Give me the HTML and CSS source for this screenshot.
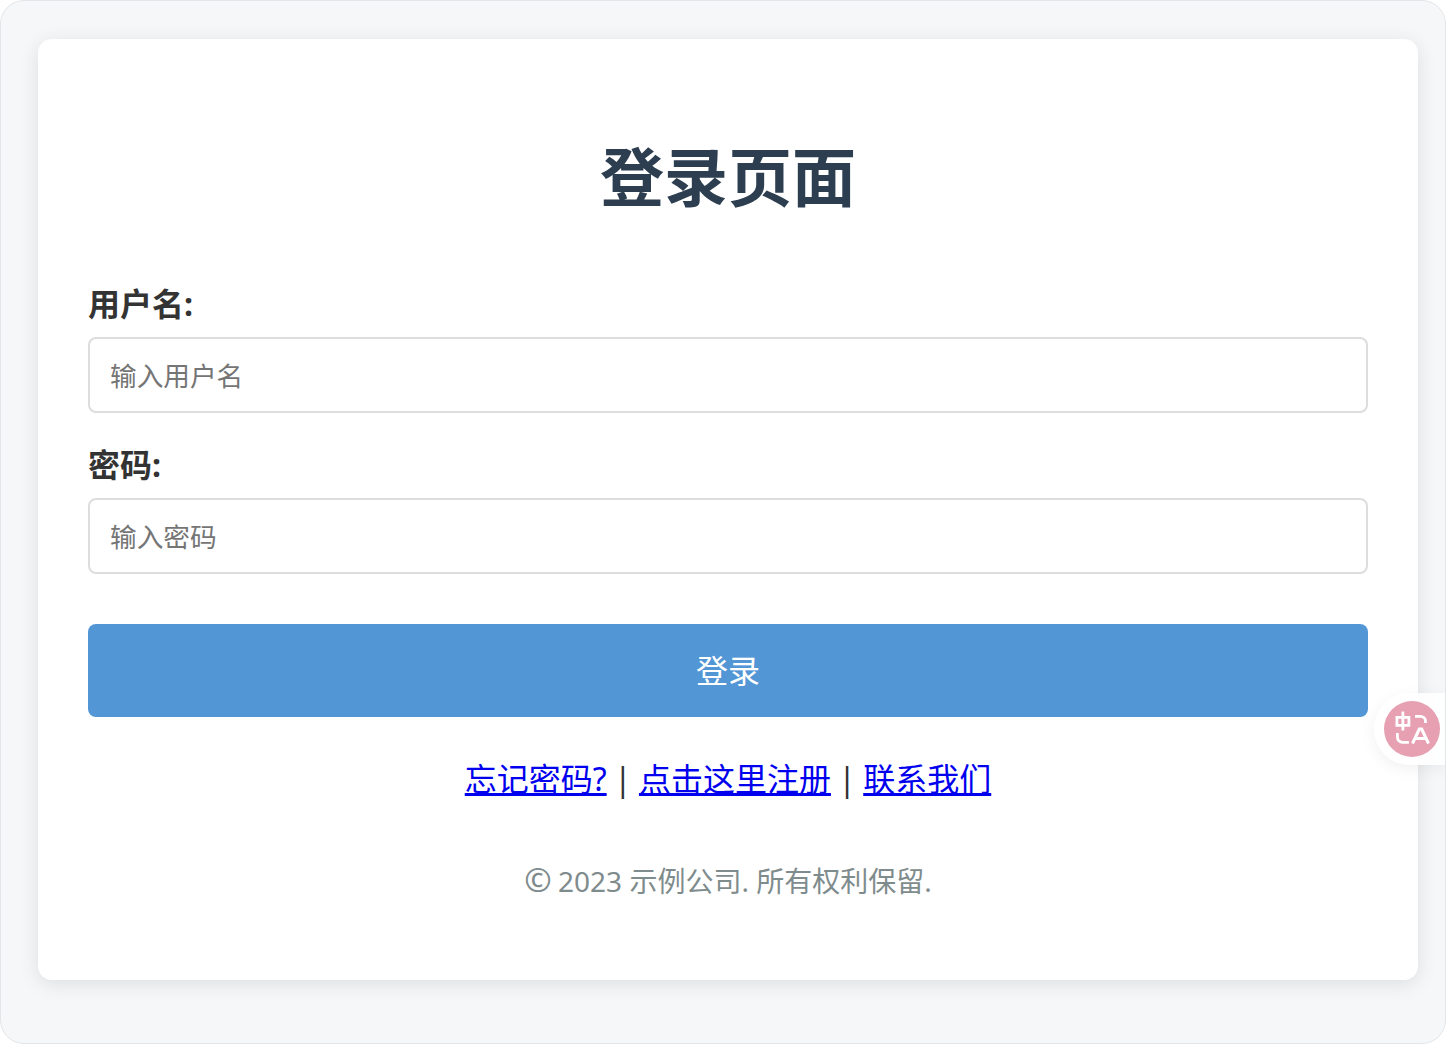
FILE: index.html
```html
<!DOCTYPE html>
<html lang="zh-CN">
<head>
<meta charset="utf-8">
<title>登录页面</title>
<link rel="stylesheet" href="styles.css">
</head>
<body>
<div class="frame">
  <main class="card">
    <h1 class="title">登录页面</h1>
    <form class="form">
      <div class="field">
        <label class="label" for="u">用户名:</label>
        <input class="input" id="u" type="text" placeholder="输入用户名">
      </div>
      <div class="field">
        <label class="label" for="p">密码:</label>
        <input class="input" id="p" type="password" placeholder="输入密码">
      </div>
      <button class="submit" type="button">登录</button>
    </form>
    <p class="links"><a href="#">忘记密码?</a> | <a href="#">点击这里注册</a> | <a href="#">联系我们</a></p>
    <p class="copy"><span class="copy-mark">©</span> 2023 示例公司. 所有权利保留.</p>
  </main>
  <div class="translate">
    <span class="translate-badge">
      <svg class="translate-icon" viewBox="0 0 56 56" width="56" height="56" fill="none" stroke="#fff" stroke-width="2.8">
        <path d="M12.900 16.400h12v8h-12zM18.900 10.500v19"/>
        <path d="M31 15.400h5.500a5 5 0 0 1 5 5v1.500"/>
        <path d="M13.400 32v4.300a5 5 0 0 0 5 5h6.500"/>
        <path d="M28.500 42.500l6.800-14.500h2.400l6.800 14.500M31 37.500h11" stroke-width="3"/>
      </svg>
    </span>
  </div>
</div>
</body>
</html>
```
FILE: styles.css
```css
* { box-sizing: border-box; }
html, body { margin: 0; height: 100%; background: #fff; }
body { font-family: "Noto Sans", "Noto Sans CJK SC", sans-serif; color: #333; }
.frame {
  position: relative;
  height: 1044px;
  padding: 38px 27px 63px 37px;
  background: #f6f7f9;
  border: 1px solid #e4e5e8;
  border-radius: 24px;
  overflow: hidden;
}
.card {
  height: 941px;
  padding: 99px 50px 0;
  background: #fff;
  border-radius: 14px;
  box-shadow: 0 4px 20px rgba(0,0,0,.1);
}
.title {
  margin: 0 0 65px;
  font-size: 64px;
  line-height: 78px;
  font-weight: 700;
  text-align: center;
  color: #2c3e50;
}
.form { display: flex; flex-direction: column; }
.field { margin-bottom: 29px; }
.label {
  display: block;
  margin-bottom: 10px;
  font-size: 32px;
  line-height: 46px;
  font-weight: 700;
  color: #333;
}
.input {
  display: block;
  width: 100%;
  height: 76px;
  padding: 0 20px;
  font: 26.67px "Noto Sans", "Noto Sans CJK SC", sans-serif;
  color: #333;
  background: #fff;
  border: 2px solid #ddd;
  border-radius: 8px;
  outline: none;
}
.input::placeholder { color: #757575; opacity: 1; }
.submit {
  height: 93px;
  margin-top: 21px;
  padding: 0 0 4px;
  font: 32px "Noto Sans", "Noto Sans CJK SC", sans-serif;
  color: #fff;
  background: #5296d5;
  border: 0;
  border-radius: 8px;
}
.links {
  margin: 39px 0 0;
  font-size: 32px;
  line-height: 46px;
  word-spacing: -1px;
  text-align: center;
  color: #333;
}
.links a { color: #0000ee; }
.copy {
  margin: 59px 0 0;
  font-size: 28px;
  line-height: 40px;
  text-align: center;
  color: #7f8c8d;
}
.copy-mark { font-size: 33px; line-height: 1; letter-spacing: -1px; }
.translate {
  position: absolute;
  right: -1px;
  top: 692px;
  width: 72px;
  height: 72px;
  padding: 8px 0 8px 10px;
  background: rgba(255,255,255,.9);
  border-radius: 36px 0 0 36px;
  box-shadow: 0 4px 16px rgba(0,0,0,.06);
}
.translate-badge {
  display: block;
  width: 56px;
  height: 56px;
  border-radius: 50%;
  background: rgba(221,118,145,.7);
}
.translate-icon { display: block; }
```
